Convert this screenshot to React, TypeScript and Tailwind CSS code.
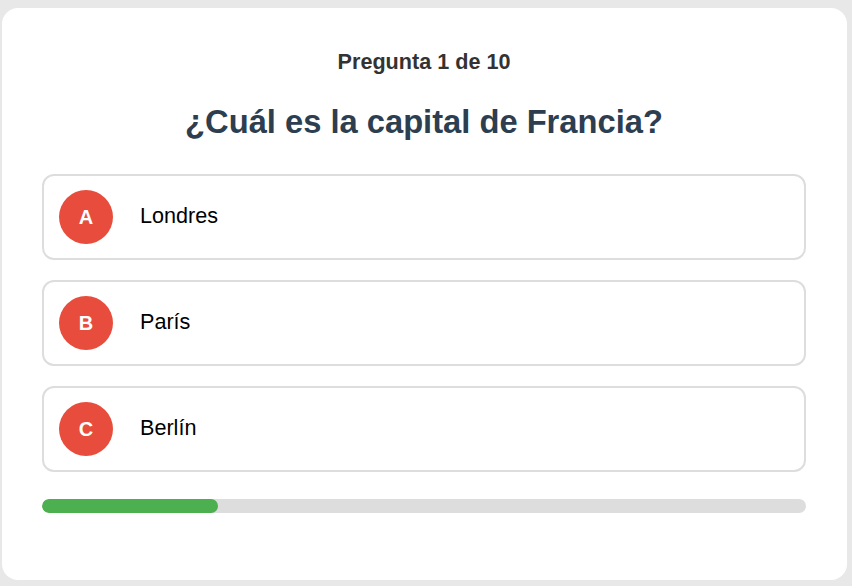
import React, { useState } from "react";

const options = [
  { letter: "A", text: "Londres" },
  { letter: "B", text: "París" },
  { letter: "C", text: "Berlín" },
];

const App: React.FC = () => {
  const [current] = useState(1);
  const total = 10;

  return (
    <div
      className="w-[852px] h-[586px] bg-[#e8e8e8] pt-[8px] pl-[2px]"
      style={{ fontFamily: '"Liberation Sans", Arial, sans-serif' }}
    >
      <div className="w-[845px] h-[572px] bg-white rounded-[16px] px-[40px] pr-[41px] pt-[42px] flex flex-col">
        <div className="text-center text-[21.6px] font-bold text-[#333333] leading-[1.15]">
          Pregunta {current} de {total}
        </div>
        <h2 className="text-center text-[32.7px] font-bold text-[#2c3e50] leading-[1.15] mt-[28px]">
          ¿Cuál es la capital de Francia?
        </h2>

        <div className="flex flex-col gap-[20px] mt-[34px]">
          {options.map((o) => (
            <div
              key={o.letter}
              className="h-[86px] border-2 border-[#dddddd] rounded-[12px] flex items-center pl-[15px]"
            >
              <div className="w-[54px] h-[54px] rounded-full bg-[#e74c3c] text-white font-bold text-[20px] flex items-center justify-center">
                {o.letter}
              </div>
              <span className="ml-[27px] mb-[2px] text-[21.6px] text-black">{o.text}</span>
            </div>
          ))}
        </div>

        <div className="mt-[27px] h-[14px] w-full rounded-full bg-[#dddddd] overflow-hidden">
          <div className="h-full w-[176px] rounded-full bg-[#4caf50]" />
        </div>
      </div>
    </div>
  );
};

export default App;
